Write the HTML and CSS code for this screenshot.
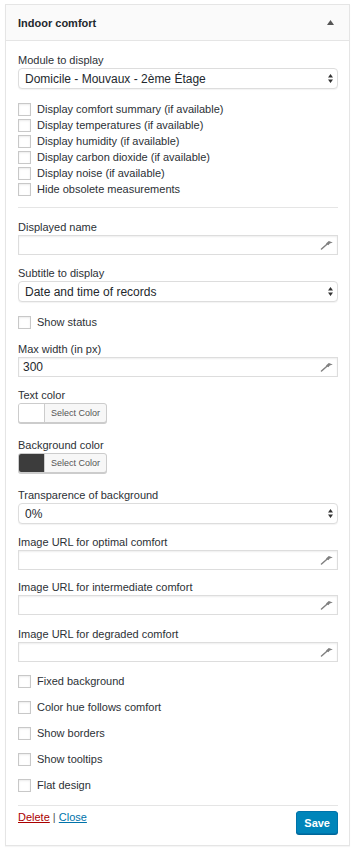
FILE: index.html
```html
<!DOCTYPE html>
<html lang="en">
<head>
    <meta charset="UTF-8">
    <meta name="viewport" content="width=device-width, initial-scale=1.0">
    <title>Indoor comfort widget</title>
    <link rel="stylesheet" href="styles.css">
</head>
<body>
    <div class="widget">
        <div class="widget-top">
            <h3 class="widget-title">Indoor comfort</h3>
            <svg class="toggle" width="7" height="5" viewBox="0 0 7 5"><path d="M0 5 L3.5 0 L7 5 Z" fill="#555"/></svg>
        </div>
        <div class="widget-inside">
            <div class="field first">
                <label>Module to display</label>
                <div class="select-wrap">
                    <select><option>Domicile - Mouvaux - 2ème Étage</option></select>
                    <svg class="arrows" width="5" height="9" viewBox="0 0 5 9"><path d="M0 3.5 L2.5 0 L5 3.5 Z M0 5.5 L2.5 9 L5 5.5 Z" fill="#333"/></svg>
                </div>
            </div>

            <div class="checks">
                <label class="check"><input type="checkbox"> Display comfort summary (if available)</label>
                <label class="check"><input type="checkbox"> Display temperatures (if available)</label>
                <label class="check"><input type="checkbox"> Display humidity (if available)</label>
                <label class="check"><input type="checkbox"> Display carbon dioxide (if available)</label>
                <label class="check"><input type="checkbox"> Display noise (if available)</label>
                <label class="check"><input type="checkbox"> Hide obsolete measurements</label>
            </div>

            <hr class="sep">

            <div class="field gap-11">
                <label>Displayed name</label>
                <div class="input-wrap">
                    <input type="text" value="">
                    <svg class="key" width="13" height="10" viewBox="0 0 13 10"><path d="M1.5 9 L7.5 3.8" stroke="#808080" stroke-width="1.5" stroke-linecap="round"/><path d="M6 3.4 L8.8 0.9 L12.8 2.5 L9.8 3.6 L8.4 5.2 Z" fill="#808080"/></svg>
                </div>
            </div>

            <div class="field gap-10">
                <label>Subtitle to display</label>
                <div class="select-wrap">
                    <select><option>Date and time of records</option></select>
                    <svg class="arrows" width="5" height="9" viewBox="0 0 5 9"><path d="M0 3.5 L2.5 0 L5 3.5 Z M0 5.5 L2.5 9 L5 5.5 Z" fill="#333"/></svg>
                </div>
            </div>

            <label class="check gap-12"><input type="checkbox"> Show status</label>

            <div class="field gap-11">
                <label>Max width (in px)</label>
                <div class="input-wrap">
                    <input type="text" value="300">
                    <svg class="key" width="13" height="10" viewBox="0 0 13 10"><path d="M1.5 9 L7.5 3.8" stroke="#808080" stroke-width="1.5" stroke-linecap="round"/><path d="M6 3.4 L8.8 0.9 L12.8 2.5 L9.8 3.6 L8.4 5.2 Z" fill="#808080"/></svg>
                </div>
            </div>

            <div class="field gap-10">
                <label>Text color</label>
                <button class="color-result"><span class="swatch light"></span><span class="color-text">Select Color</span></button>
            </div>

            <div class="field gap-14">
                <label>Background color</label>
                <button class="color-result"><span class="swatch dark"></span><span class="color-text">Select Color</span></button>
            </div>

            <div class="field gap-14">
                <label>Transparence of background</label>
                <div class="select-wrap">
                    <select><option>0%</option></select>
                    <svg class="arrows" width="5" height="9" viewBox="0 0 5 9"><path d="M0 3.5 L2.5 0 L5 3.5 Z M0 5.5 L2.5 9 L5 5.5 Z" fill="#333"/></svg>
                </div>
            </div>

            <div class="field gap-10">
                <label>Image URL for optimal comfort</label>
                <div class="input-wrap">
                    <input type="text" value="">
                    <svg class="key" width="13" height="10" viewBox="0 0 13 10"><path d="M1.5 9 L7.5 3.8" stroke="#808080" stroke-width="1.5" stroke-linecap="round"/><path d="M6 3.4 L8.8 0.9 L12.8 2.5 L9.8 3.6 L8.4 5.2 Z" fill="#808080"/></svg>
                </div>
            </div>

            <div class="field gap-9">
                <label>Image URL for intermediate comfort</label>
                <div class="input-wrap">
                    <input type="text" value="">
                    <svg class="key" width="13" height="10" viewBox="0 0 13 10"><path d="M1.5 9 L7.5 3.8" stroke="#808080" stroke-width="1.5" stroke-linecap="round"/><path d="M6 3.4 L8.8 0.9 L12.8 2.5 L9.8 3.6 L8.4 5.2 Z" fill="#808080"/></svg>
                </div>
            </div>

            <div class="field gap-11">
                <label>Image URL for degraded comfort</label>
                <div class="input-wrap">
                    <input type="text" value="">
                    <svg class="key" width="13" height="10" viewBox="0 0 13 10"><path d="M1.5 9 L7.5 3.8" stroke="#808080" stroke-width="1.5" stroke-linecap="round"/><path d="M6 3.4 L8.8 0.9 L12.8 2.5 L9.8 3.6 L8.4 5.2 Z" fill="#808080"/></svg>
                </div>
            </div>

            <div class="checks spaced">
                <label class="check"><input type="checkbox"> Fixed background</label>
                <label class="check"><input type="checkbox"> Color hue follows comfort</label>
                <label class="check"><input type="checkbox"> Show borders</label>
                <label class="check"><input type="checkbox"> Show tooltips</label>
                <label class="check"><input type="checkbox"> Flat design</label>
            </div>

            <hr class="sep bottom">

            <div class="widget-control">
                <div class="links">
                    <a href="#" class="delete">Delete</a> <span class="pipe">|</span> <a href="#" class="close">Close</a>
                </div>
                <button class="save">Save</button>
            </div>
        </div>
    </div>
</body>
</html>
```

FILE: styles.css
```css
body {
    margin: 0;
    padding: 4px 5px;
    background: #fff;
    font-family: "Liberation Sans", Arial, sans-serif;
    font-size: 11px;
    color: #2c3136;
}
.widget {
    border: 1px solid #e5e5e5;
    box-shadow: 0 1px 1px rgba(0,0,0,0.04);
    background: #fff;
}
.widget-top {
    height: 35px;
    display: flex;
    align-items: center;
    justify-content: space-between;
    padding: 0 15px 0 12px;
    background: #fafafa;
    border-bottom: 1px solid #e5e5e5;
}
.widget-title {
    margin: 0;
    font-size: 11px;
    font-weight: bold;
    color: #23282d;
}
.widget-inside {
    padding: 11px 11px 11px 12px;
}
.field label {
    display: block;
    line-height: 16px;
}
.gap-9 { margin-top: 9px; }
.gap-10 { margin-top: 10px; }
.gap-11 { margin-top: 11px; }
.gap-12 { margin-top: 12px; }
.gap-14 { margin-top: 14px; }

.select-wrap, .input-wrap { position: relative; }
select {
    -webkit-appearance: none;
    appearance: none;
    display: block;
    width: 100%;
    height: 21px;
    margin: 0;
    padding: 0 20px 0 6px;
    border: 1px solid #ddd;
    border-radius: 4px;
    background: #fff;
    box-shadow: 0 1px 1px rgba(0,0,0,0.05);
    font-family: "Liberation Sans", Arial, sans-serif;
    font-size: 12px;
    color: #23282d;
}
.arrows {
    position: absolute;
    right: 5px;
    top: 6px;
}
input[type="text"] {
    display: block;
    box-sizing: border-box;
    width: 100%;
    height: 20px;
    margin: 0;
    padding: 0 20px 0 4px;
    border: 1px solid #ddd;
    border-radius: 0;
    box-shadow: inset 0 1px 2px rgba(0,0,0,0.07);
    font-family: "Liberation Sans", Arial, sans-serif;
    font-size: 12px;
    color: #23282d;
}
.key {
    position: absolute;
    right: 5px;
    top: 5px;
}
.checks { margin-top: 12px; }
.check {
    display: flex;
    align-items: center;
    gap: 6px;
    height: 16px;
    line-height: 16px;
}
.spaced { margin-top: 11px; }
.spaced .check + .check { margin-top: 10px; }
input[type="checkbox"] {
    -webkit-appearance: none;
    appearance: none;
    width: 13px;
    height: 13px;
    margin: 0;
    border: 1px solid #c8c8c8;
    background: #fff;
    box-shadow: inset 0 1px 2px rgba(0,0,0,0.08);
}
.sep {
    margin: 10px 0 0;
    border: 0;
    border-top: 1px solid #e5e5e5;
    height: 0;
}
.sep.bottom { margin-top: 12px; }

.color-result {
    display: flex;
    height: 20px;
    margin: 0;
    padding: 0;
    border: 1px solid #ccc;
    border-radius: 3px;
    background: #f7f7f7;
    box-shadow: 0 1px 0 #ccc;
    font-family: "Liberation Sans", Arial, sans-serif;
    overflow: hidden;
}
.swatch {
    width: 25px;
    height: 100%;
    border-right: 1px solid #ccc;
}
.swatch.light { background: #fff; }
.swatch.dark { background: #3c3c3c; }
.color-text {
    padding: 0 6px;
    line-height: 18px;
    font-size: 9px;
    color: #555;
}

.widget-control {
    display: flex;
    justify-content: space-between;
    align-items: flex-start;
    padding-top: 5px;
}
.links {
    line-height: 12px;
    font-size: 11px;
}
.delete { color: #a00; }
.close { color: #0073aa; }
.pipe { color: #555; }
.save {
    height: 23px;
    margin: 0;
    padding: 0 7px;
    border: 1px solid #0073aa;
    border-radius: 3px;
    background: #0085ba;
    box-shadow: 0 1px 0 #006799;
    color: #fff;
    font-family: "Liberation Sans", Arial, sans-serif;
    font-size: 11px;
    font-weight: bold;
}
```
